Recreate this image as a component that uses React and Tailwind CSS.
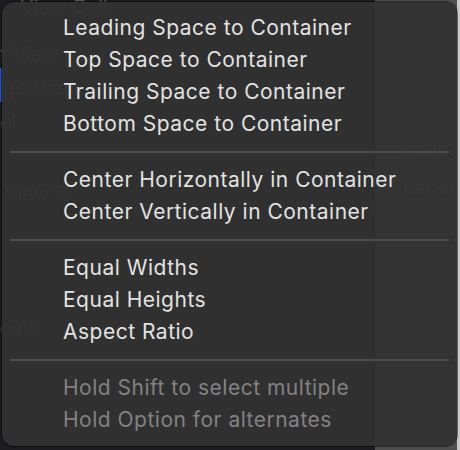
const groups = [
  ["Leading Space to Container", "Top Space to Container", "Trailing Space to Container", "Bottom Space to Container"],
  ["Center Horizontally in Container", "Center Vertically in Container"],
  ["Equal Widths", "Equal Heights", "Aspect Ratio"],
];

const hints = ["Hold Shift to select multiple", "Hold Option for alternates"];

function Backdrop() {
  return (
    <div className="flex h-full w-full">
      <div className="flex-1 bg-[#1c1c20] text-[20px] text-[#5c5c5c]">
        <div className="h-[34px] pl-[20px] leading-[14px]">View Cell</div>
        <div className="h-[34px] leading-[40px]">t View</div>
        <div className="h-[34px] border-l-[3px] border-[#2352c9] leading-[40px]">ge View</div>
        <div className="h-[76px] leading-[40px]">el</div>
        <div className="h-[140px] pl-[4px] leading-[30px]">View P</div>
        <div className="leading-[20px]">oint</div>
      </div>
      <div className="flex w-[82px] flex-col bg-[#4e4e4e] pt-[130px] pl-[28px] text-[20px] text-[#6e6e6e]">
        <div className="leading-[38px]">Label</div>
        <div className="leading-[38px]">Label</div>
      </div>
      <div className="w-[3px] bg-[#c9c9c9]" />
    </div>
  );
}

export default function App() {
  return (
    <div className="relative h-[450px] w-[460px] overflow-hidden bg-[#1c1c20]" style={{ fontFamily: "Inter, 'Noto Sans', sans-serif" }}>
      <Backdrop />
      <div className="absolute left-[2px] top-[2px] flex h-[444px] w-[455px] flex-col rounded-[12px] bg-[rgba(50,50,50,0.93)] py-[10px] shadow-[0_0_0_1px_rgba(0,0,0,0.5)]">
        {groups.map((items, gi) => (
          <div key={gi}>
            {gi > 0 && (
              <div className="flex h-[24px] items-center px-[8px]">
                <div className="h-[2px] w-full bg-[#4c4c4c]" />
              </div>
            )}
            {items.map((t) => (
              <div key={t} className="h-[32px] pl-[61px] text-[21px] leading-[32px] tracking-[0.5px] text-[#e2e2e2]">
                {t}
              </div>
            ))}
          </div>
        ))}
        <div className="flex h-[24px] items-center px-[8px]">
          <div className="h-[2px] w-full bg-[#4c4c4c]" />
        </div>
        {hints.map((t) => (
          <div key={t} className="h-[32px] pl-[61px] text-[21px] leading-[32px] tracking-[0.5px] text-[#828282]">
            {t}
          </div>
        ))}
      </div>
    </div>
  );
}
